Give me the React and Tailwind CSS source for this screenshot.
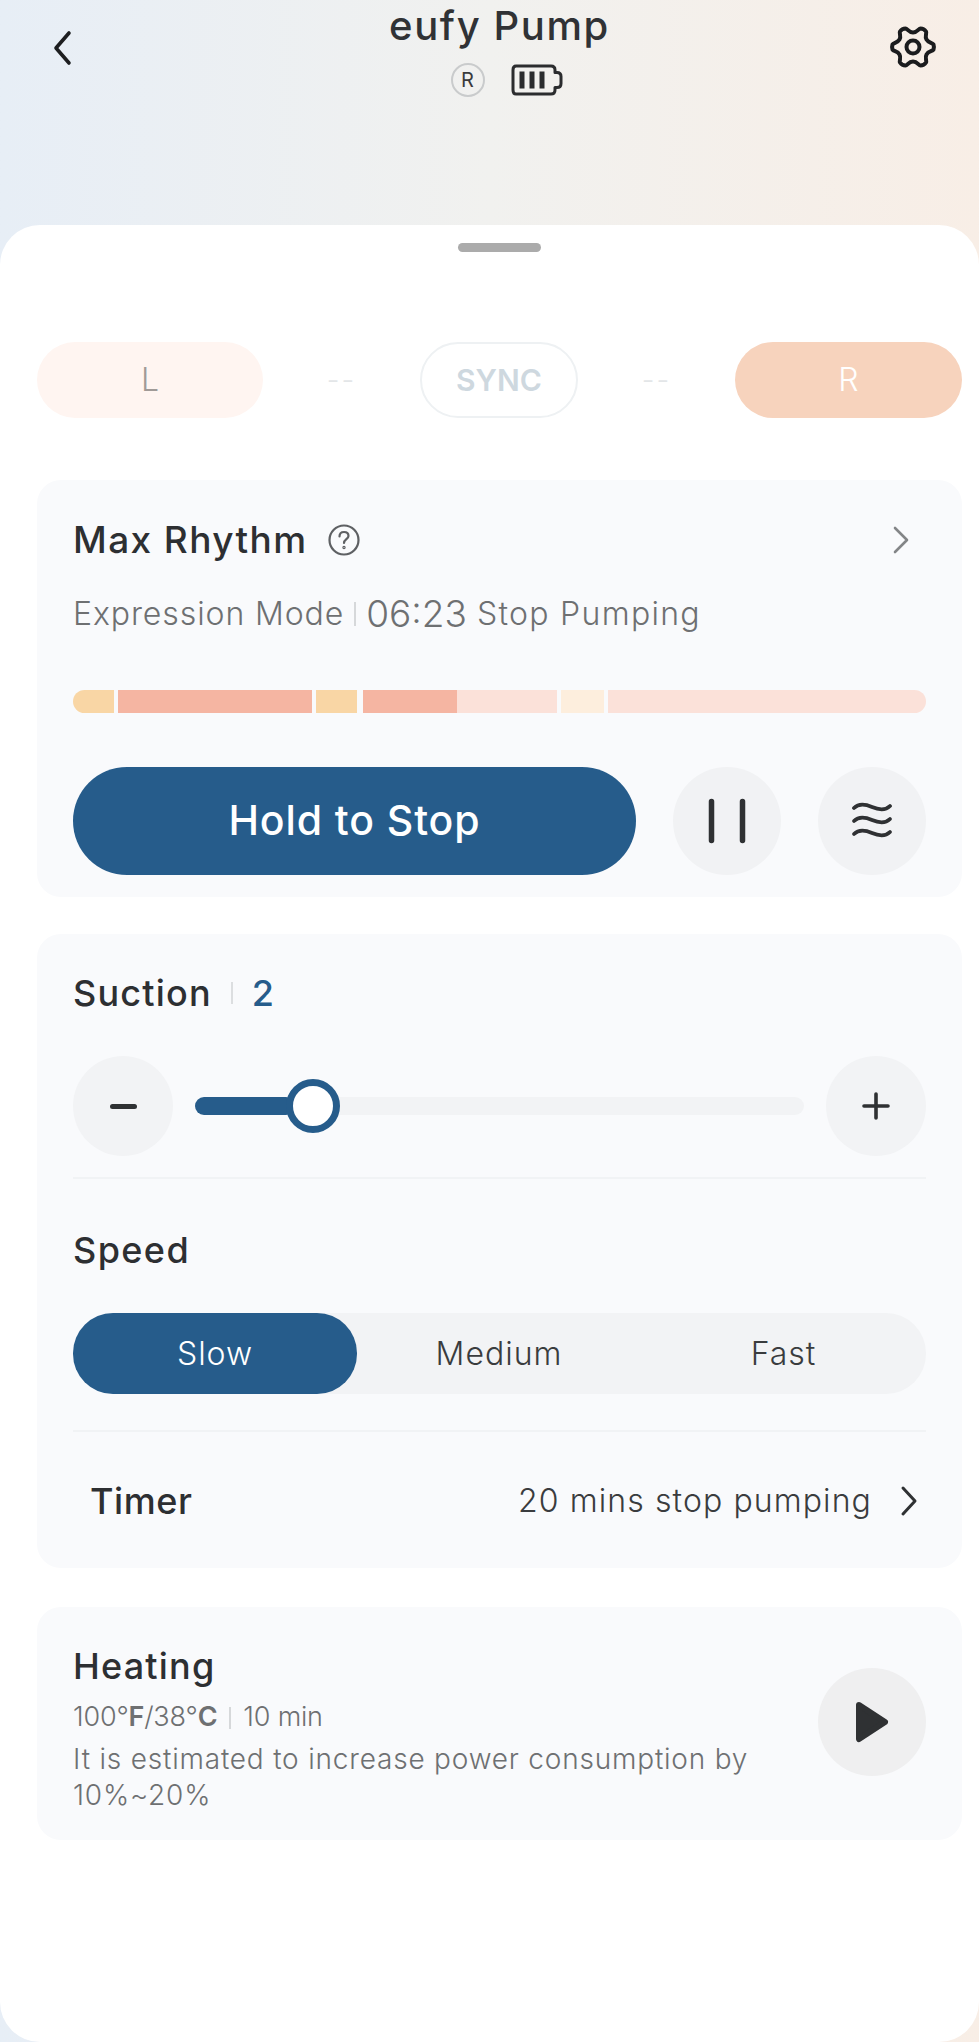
import React from "react";

const Dark = "#2f3133";

function Gear() {
  return (
    <svg width="48" height="48" viewBox="0 0 48 48" fill="none" stroke="#1b1c1e" strokeWidth="4" strokeLinejoin="round">
      <path d="M16.5 5.5 C18.5 5.5 19.5 9.5 24 9.5 C28.5 9.5 29.5 5.5 31.5 5.5 C33.5 5.5 36 7 37 8.5 C38 10.5 35.5 13 37.5 16.5 C39.5 20 43.5 19.5 44.5 21.5 C45 23 45 25 44.5 26.5 C43.5 28.5 39.5 28 37.5 31.5 C35.5 35 38 37.5 37 39.5 C36 41 33.5 42.5 31.5 42.5 C29.5 42.5 28.5 38.5 24 38.5 C19.5 38.5 18.5 42.5 16.5 42.5 C14.5 42.5 12 41 11 39.5 C10 37.5 12.5 35 10.5 31.5 C8.5 28 4.5 28.5 3.5 26.5 C3 25 3 23 3.5 21.5 C4.5 19.5 8.5 20 10.5 16.5 C12.5 13 10 10.5 11 8.5 C12 7 14.5 5.5 16.5 5.5 Z" />
      <circle cx="24" cy="24" r="6.5" />
    </svg>
  );
}

function Battery() {
  return (
    <svg width="52" height="32" viewBox="0 0 52 32" fill="none">
      <path d="M5 2 H40 Q44 2 44 6 V8.5 H46 Q50 8.5 50 12.5 V19.5 Q50 23.5 46 23.5 H44 V26 Q44 30 40 30 H5 Q2 30 2 26 V6 Q2 2 5 2 Z" stroke="#2b2c2e" strokeWidth="3" strokeLinejoin="round" />
      <path d="M11 7.5 V24.5 M21 7.5 V24.5 M31 7.5 V24.5" stroke="#2b2c2e" strokeWidth="5" />
    </svg>
  );
}

function Round({ size = "w-[108px] h-[108px]", bg = "bg-[#f1f2f4]", children }) {
  return (
    <div className={`${size} ${bg} rounded-full flex items-center justify-center shrink-0`}>
      {children}
    </div>
  );
}

function Divider() {
  return <div className="h-[2px] bg-[#f1f3f5]" />;
}

function App() {
  return (
    <div
      className="w-[979px] h-[2042px] overflow-hidden bg-gradient-to-r from-[#e7eef6] via-[#f1f1ef] to-[#f8eee6]"
      style={{ fontFamily: "Inter, 'Noto Sans', sans-serif", color: Dark }}
    >
      {/* Header */}
      <header className="h-[225px] flex items-start pl-[50px]">
        <div className="w-[290px] shrink-0">
          <svg className="mt-[30px]" width="28" height="36" viewBox="0 0 28 36" fill="none" stroke="#1d1e20" strokeWidth="3.6" strokeLinecap="round" strokeLinejoin="round">
            <path d="M19 3 L6 18 L19 33" />
          </svg>
        </div>
        <div className="w-[319px] shrink-0 flex flex-col items-center">
          <h1 className="text-[40px] leading-[52px] font-medium tracking-[1.6px] whitespace-nowrap text-[#303235]">eufy Pump</h1>
          <div className="flex items-center gap-[26px] mt-[11px] ml-[14px]">
            <span className="w-[34px] h-[34px] rounded-full border-2 border-[#c9cbcc] flex items-center justify-center text-[20px] leading-none text-[#3a3b3d]">R</span>
            <Battery />
          </div>
        </div>
        <div className="mt-[23px] ml-[230px]">
          <Gear />
        </div>
      </header>

      {/* Sheet */}
      <main className="relative h-[1817px] bg-white rounded-[40px] pl-[37px] pr-[17px]">
        <div className="absolute top-[18px] left-[458px] w-[83px] h-[9px] rounded-full bg-[#ababab]" />

        {/* Side selector */}
        <div className="pt-[117px] flex items-center justify-between">
          <div className="w-[226px] h-[76px] rounded-[38px] bg-[#fff5f1] flex items-center justify-center text-[32px] font-light text-[#a09a97]">L</div>
          <span className="text-[28px] font-light leading-none tracking-[2px] text-[#e3e6e8]">--</span>
          <div className="w-[158px] h-[76px] rounded-[38px] border-2 border-[#eef1f3] flex items-center justify-center text-[30px] font-semibold text-[#ced8df]">SYNC</div>
          <span className="text-[28px] font-light leading-none tracking-[2px] text-[#e3e6e8]">--</span>
          <div className="w-[227px] h-[76px] rounded-[38px] bg-[#f7d3bd] flex items-center justify-center text-[32px] font-light text-white">R</div>
        </div>

        {/* Max Rhythm */}
        <section className="mt-[62px] h-[417px] bg-[#f9fafc] rounded-[24px] pl-[36px] pr-[36px] pt-[36px]">
          <div className="flex items-center h-[48px]">
            <h2 className="text-[37px] leading-[48px] font-medium tracking-[1.4px] text-[#2d2f32]">Max Rhythm</h2>
            <svg className="ml-[20px]" width="32" height="32" viewBox="0 0 32 32" fill="none" stroke="#5e6063" strokeWidth="2.2" strokeLinecap="round">
              <circle cx="16" cy="16" r="14.5" />
              <path d="M11.5 12.5 C11.5 9.5 13.5 8 16 8 C18.5 8 20.5 9.5 20.5 12 C20.5 15 16 15.5 16 19" />
              <circle cx="16" cy="23.5" r="0.6" />
            </svg>
            <svg className="ml-auto mr-[16px]" width="18" height="30" viewBox="0 0 18 30" fill="none" stroke="#838587" strokeWidth="2.6" strokeLinecap="round" strokeLinejoin="round">
              <path d="M3 3 L15 15 L3 27" />
            </svg>
          </div>
          <div className="flex items-center h-[40px] mt-[30px] text-[#6e7072]">
            <span className="text-[32px] font-light leading-[40px] tracking-[0.9px]">Expression Mode</span>
            <span className="w-[2px] h-[24px] bg-[#d6d8da] mx-[10px]" />
            <span className="text-[37px] font-light leading-[40px]">06:23</span>
            <span className="text-[32px] font-light leading-[40px] tracking-[1.3px] ml-[10px]">Stop Pumping</span>
          </div>
          <div className="flex gap-[4px] h-[23px] mt-[56px] rounded-full overflow-hidden">
            <div className="w-[41px] bg-[#f9d6a5]" />
            <div className="w-[194px] bg-[#f5b5a2]" />
            <div className="w-[41px] bg-[#f9d6a5]" />
            <div className="w-[94px] ml-[2px] bg-[#f5b5a2] mr-[-4px]" />
            <div className="w-[100px] bg-[#fbe1d9]" />
            <div className="w-[43px] bg-[#fdeedd]" />
            <div className="flex-1 bg-[#fbe1d9]" />
          </div>
          <div className="flex items-center mt-[54px]">
            <div className="w-[563px] h-[108px] rounded-[54px] bg-[#265c8b] flex items-center justify-center text-[41px] font-medium tracking-[0.9px] text-white">Hold to Stop</div>
            <div className="ml-[37px]">
              <Round>
                <svg width="38" height="46" viewBox="0 0 38 46" fill="none" stroke="#2f3133" strokeWidth="5.5" strokeLinecap="round">
                  <path d="M3.5 3.5 V42.5 M34.5 3.5 V42.5" />
                </svg>
              </Round>
            </div>
            <div className="ml-[37px]">
              <Round>
                <svg width="42" height="40" viewBox="0 0 42 40" fill="none" stroke="#2f3133" strokeWidth="3.8" strokeLinecap="round">
                  <path d="M3 7 C8 2 14 3 21 6 C28 9 34 10 39 5" />
                  <path d="M3 20 C8 15 14 16 21 19 C28 22 34 23 39 18" />
                  <path d="M3 33 C8 28 14 29 21 32 C28 35 34 36 39 31" />
                </svg>
              </Round>
            </div>
          </div>
        </section>

        {/* Suction / Speed / Timer */}
        <section className="mt-[37px] h-[634px] bg-[#f9fafc] rounded-[24px] px-[36px] pt-[37px]">
          <div className="flex items-center h-[44px]">
            <h2 className="text-[36px] leading-[44px] font-medium tracking-[1.2px] text-[#2d2f32]">Suction</h2>
            <span className="w-[2px] h-[22px] bg-[#dcdee0] ml-[19px] mr-[19px]" />
            <span className="text-[36px] leading-[44px] font-medium text-[#265c8b]">2</span>
          </div>
          <div className="flex items-center mt-[41px]">
            <Round size="w-[100px] h-[100px]" bg="bg-[#f2f3f5]">
              <div className="w-[27px] h-[5px] rounded-full bg-[#2f3133]" />
            </Round>
            <div className="relative flex-1 h-[18px] mx-[22px] rounded-full bg-[#f2f3f5]">
              <div className="w-[100px] h-full rounded-full bg-[#265c8b]" />
              <div className="absolute left-[91px] top-[-18px] w-[54px] h-[54px] rounded-full bg-white border-[7px] border-[#265c8b]" />
            </div>
            <Round size="w-[100px] h-[100px]" bg="bg-[#f2f3f5]">
              <svg width="30" height="30" viewBox="0 0 30 30" fill="none" stroke="#2f3133" strokeWidth="3.6" strokeLinecap="round">
                <path d="M15 3 V27 M3 15 H27" />
              </svg>
            </Round>
          </div>
          <div className="mt-[21px]"><Divider /></div>
          <h2 className="text-[36px] leading-[44px] font-medium tracking-[1.4px] text-[#2d2f32] mt-[49px]">Speed</h2>
          <div className="flex items-center h-[81px] mt-[41px] rounded-[40px] bg-[#f2f3f5] text-[32px] tracking-[1px]">
            <div className="w-[284px] h-full rounded-[40px] bg-[#265c8b] text-white font-light flex items-center justify-center">Slow</div>
            <div className="w-[284px] font-light text-[#3a3c3e] flex items-center justify-center">Medium</div>
            <div className="flex-1 font-light text-[#3a3c3e] flex items-center justify-center">Fast</div>
          </div>
          <div className="mt-[36px]"><Divider /></div>
          <div className="flex items-center justify-between h-[137px] pl-[17px] pr-[8px]">
            <h2 className="text-[36px] font-medium tracking-[0.6px] text-[#2d2f32]">Timer</h2>
            <div className="flex items-center gap-[28px]">
              <span className="text-[32px] font-light tracking-[1.1px] text-[#3a3c3e]">20 mins stop pumping</span>
              <svg width="18" height="32" viewBox="0 0 18 32" fill="none" stroke="#2f3133" strokeWidth="3" strokeLinecap="round" strokeLinejoin="round">
                <path d="M3 3 L15 16 L3 29" />
              </svg>
            </div>
          </div>
        </section>

        {/* Heating */}
        <section className="mt-[39px] h-[233px] bg-[#f9fafc] rounded-[24px] px-[36px] flex items-center justify-between">
          <div className="w-[700px] pt-[9px]">
            <h2 className="text-[36px] leading-[44px] font-medium tracking-[1.2px] text-[#2d2f32]">Heating</h2>
            <div className="flex items-center h-[34px] mt-[13px] text-[27px] font-light tracking-[-0.2px] text-[#6e7072]">
              <span>100°<b className="font-semibold">F</b>/38°<b className="font-semibold">C</b></span>
              <span className="w-[2px] h-[22px] bg-[#d6d8da] mx-[12px]" />
              <span>10 min</span>
            </div>
            <p className="mt-[6px] text-[28px] leading-[36px] tracking-[0.8px] font-light text-[#6e7072]">It is estimated to increase power consumption by 10%~20%</p>
          </div>
          <div className="mt-[-4px]">
            <Round bg="bg-[#efeff0]">
              <svg width="34" height="42" viewBox="0 0 34 42" fill="#2f3133" stroke="#2f3133" strokeWidth="6" strokeLinejoin="round">
                <path d="M4 4 L30 21 L4 38 Z" />
              </svg>
            </Round>
          </div>
        </section>
      </main>
    </div>
  );
}

export default App;
